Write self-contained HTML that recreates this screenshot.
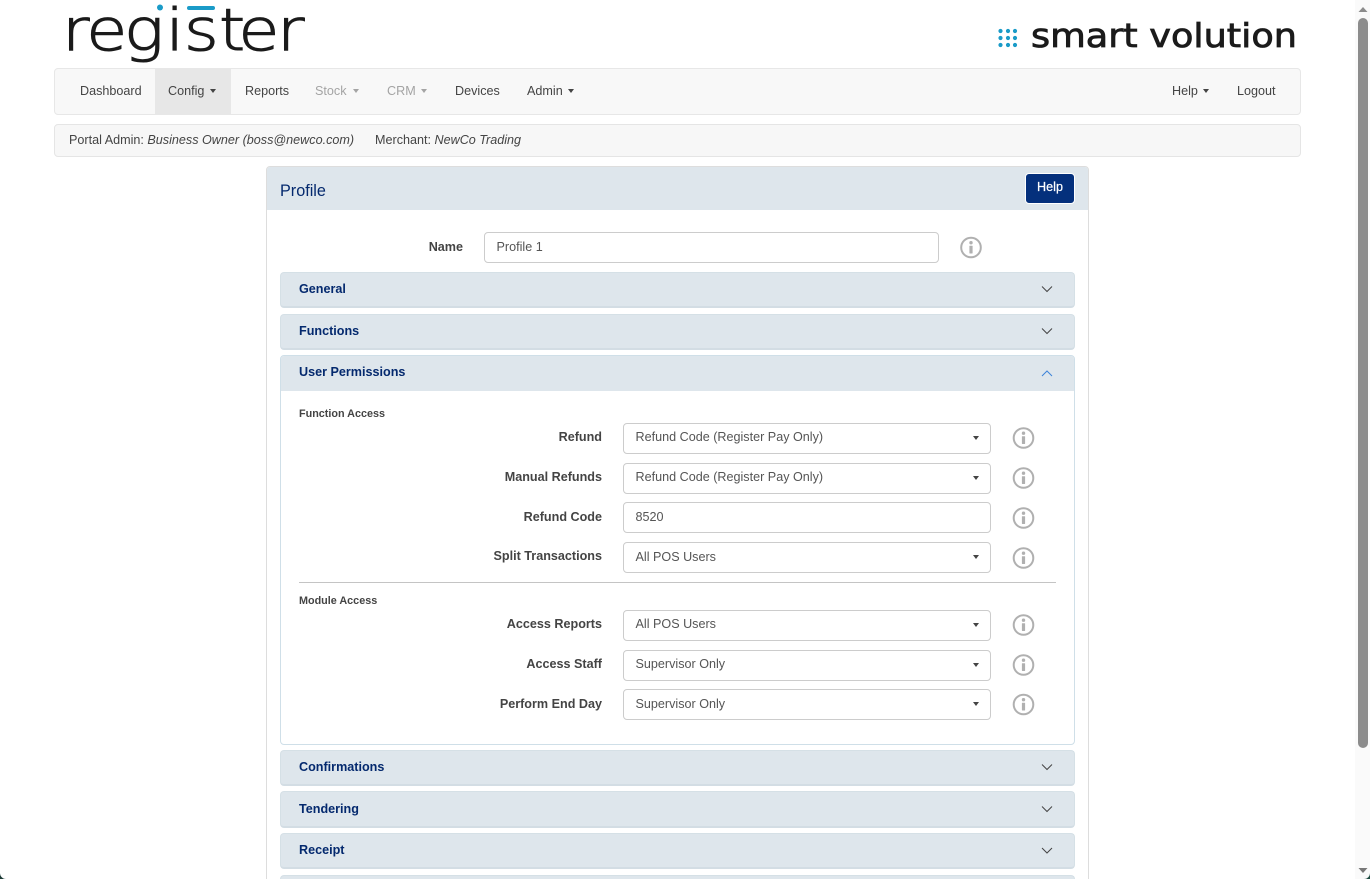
<!DOCTYPE html>
<html><head><meta charset="utf-8"><style>
html,body{margin:0;padding:0;width:1370px;height:879px;overflow:hidden;background:#fff}
body{position:relative;font-family:"Liberation Sans",Arial,sans-serif;font-size:12.6px;color:#333}
.a{position:absolute;white-space:nowrap;line-height:22px}
.box{position:absolute;box-sizing:border-box}
.n{color:#444}.d{color:#a4a4a4}
.car{position:absolute;width:0;height:0;border-top:4px solid #444;border-left:3.5px solid transparent;border-right:3.5px solid transparent}
.acc{position:absolute;left:280px;width:795px;box-sizing:border-box;background:#dee6ec;border:1px solid #d5e0e6;border-bottom:2px solid #d3dde4;border-radius:4px}
.acct{position:absolute;left:299px;font-weight:bold;color:#04296e;line-height:22px;white-space:nowrap}
.l{position:absolute;right:768px;font-weight:bold;color:#444;line-height:22px;white-space:nowrap}
.f{position:absolute;left:623px;width:368px;height:31px;box-sizing:border-box;border:1px solid #ccc;border-radius:4px;background:#fff;padding:0 11.5px;line-height:29px;color:#555;white-space:nowrap}
.u{line-height:27px}
.f i{position:absolute;right:11px;top:12px;width:0;height:0;border-top:4px solid #444;border-left:3.5px solid transparent;border-right:3.5px solid transparent}
svg{position:absolute;overflow:visible}
</style></head><body>

<svg style="left:0;top:0" width="1370" height="879">
<g transform="scale(1.15 1)"><text x="53.900 75 107.800 144 160 190.400 207.300 240.900" y="50" font-family="'DejaVu Sans','Liberation Sans',sans-serif" font-size="58" fill="#1b1b1b" stroke="#1b1b1b" stroke-width="1.100" font-weight="200">register</text></g>
<circle cx="160" cy="7.500" r="3" fill="#1a9bc8"/><rect x="187" y="6" width="28" height="4" rx="2" fill="#1a9bc8"/>
<text x="1031" y="47" font-family="'DejaVu Sans',sans-serif" font-size="33" textLength="266" lengthAdjust="spacingAndGlyphs" fill="#1b1b1b" stroke="#1b1b1b" stroke-width=".8">smart volution</text>
<g fill="#1a9bc8"><circle cx="1000.500" cy="31" r="2.100"/><circle cx="1008" cy="31" r="2.100"/><circle cx="1015" cy="31" r="2.100"/><circle cx="1000.500" cy="38" r="2.100"/><circle cx="1008" cy="38" r="2.100"/><circle cx="1015" cy="38" r="2.100"/><circle cx="1000.500" cy="45" r="2.100"/><circle cx="1008" cy="45" r="2.100"/><circle cx="1015" cy="45" r="2.100"/></g>
</svg>

<div class="box" style="left:54px;top:68px;width:1247px;height:47px;background:#f8f8f8;border:1px solid #e7e7e7;border-radius:4px"></div>
<div class="box" style="left:155px;top:69px;width:76px;height:45px;background:#e7e7e7"></div>
<div class="a n" style="left:80px;top:80px">Dashboard</div>
<div class="a n" style="left:168px;top:80px">Config</div><div class="car" style="left:210px;top:89px"></div>
<div class="a n" style="left:245px;top:80px">Reports</div>
<div class="a d" style="left:315px;top:80px">Stock</div><div class="car" style="left:353px;top:89px;border-top-color:#a4a4a4"></div>
<div class="a d" style="left:387px;top:80px">CRM</div><div class="car" style="left:421px;top:89px;border-top-color:#a4a4a4"></div>
<div class="a n" style="left:455px;top:80px">Devices</div>
<div class="a n" style="left:527px;top:80px">Admin</div><div class="car" style="left:568px;top:89px"></div>
<div class="a n" style="left:1172px;top:80px">Help</div><div class="car" style="left:1203px;top:89px"></div>
<div class="a n" style="left:1237px;top:80px">Logout</div>

<div class="box" style="left:54px;top:124px;width:1247px;height:33px;background:#f7f7f7;border:1px solid #e5e5e5;border-radius:4px"></div>
<div class="a n" style="left:69px;top:129px">Portal Admin: <i>Business Owner (boss@newco.com)</i></div>
<div class="a n" style="left:375px;top:129px">Merchant: <i>NewCo Trading</i></div>

<div class="box" style="left:266px;top:166px;width:823px;height:730px;background:#fff;border:1px solid #ddd;border-radius:4px"></div>
<div class="box" style="left:267px;top:167px;width:821px;height:43px;background:#dee6ec;border-radius:3px 3px 0 0"></div>
<div class="a" style="left:280px;top:180px;font-size:16.200px;color:#04296e">Profile</div>
<div class="box" style="left:1025px;top:173px;width:50px;height:31px;background:#04307c;border:1px solid #fff;border-radius:4px;color:#fff;font-size:12.600px;text-align:center;line-height:27px;-webkit-text-stroke:.2px #fff">Help</div>

<div class="l" style="right:907px;top:236px">Name</div>
<div class="f" style="left:484px;top:232px;width:455px">Profile 1</div>

<div class="acc" style="top:272px;height:36px"></div><div class="acct" style="top:278px">General</div>
<div class="acc" style="top:314px;height:36px"></div><div class="acct" style="top:320px">Functions</div>
<div class="box" style="left:280px;top:355px;width:795px;height:390px;background:#fff;border:1px solid #cfdfe8;border-radius:4px"></div>
<div class="box" style="left:281px;top:356px;width:793px;height:35px;background:#dee6ec;border-radius:3px 3px 0 0"></div>
<div class="acct" style="top:361px">User Permissions</div>
<div class="acc" style="top:750px;height:36px"></div><div class="acct" style="top:756px">Confirmations</div>
<div class="acc" style="top:791px;height:37px"></div><div class="acct" style="top:798px">Tendering</div>
<div class="acc" style="top:833px;height:36px"></div><div class="acct" style="top:839px">Receipt</div>
<div class="acc" style="top:875px;height:20px"></div>

<svg style="left:0;top:0" width="1370" height="879" fill="none" stroke="#444" stroke-width="1">
<path d="M1042 286.500l5 5 5-5"/><path d="M1042 328.500l5 5 5-5"/>
<path d="M1042 376l5-5 5 5" stroke="#3d84d8"/>
<path d="M1042 764.500l5 5 5-5"/><path d="M1042 806.500l5 5 5-5"/><path d="M1042 848l5 5 5-5"/>
</svg>

<div class="a" style="left:299px;top:403px;font-size:10.800px;font-weight:bold;color:#444">Function Access</div>
<div class="l" style="top:426px">Refund</div>
<div class="f u" style="top:423px">Refund Code (Register Pay Only)<i></i></div>
<div class="l" style="top:466px">Manual Refunds</div>
<div class="f u" style="top:463px">Refund Code (Register Pay Only)<i></i></div>
<div class="l" style="top:506px">Refund Code</div>
<div class="f" style="top:502px">8520</div>
<div class="l" style="top:545px">Split Transactions</div>
<div class="f" style="top:542px">All POS Users<i></i></div>
<div class="box" style="left:299px;top:582px;width:757px;height:1px;background:#c4c4c4"></div>
<div class="a" style="left:299px;top:590px;font-size:10.800px;font-weight:bold;color:#444">Module Access</div>
<div class="l" style="top:613px">Access Reports</div>
<div class="f u" style="top:610px">All POS Users<i></i></div>
<div class="l" style="top:653px">Access Staff</div>
<div class="f u" style="top:650px">Supervisor Only<i></i></div>
<div class="l" style="top:693px">Perform End Day</div>
<div class="f" style="top:689px">Supervisor Only<i></i></div>

<svg style="left:0;top:0" width="1370" height="879">
<defs><g id="inf"><circle r="9.800" fill="none" stroke="#b0b0b0" stroke-width="2"/><circle cy="-4.800" r="1.700" fill="#b0b0b0"/><rect x="-1.600" y="-1.800" width="3.200" height="7.800" rx=".5" fill="#b0b0b0"/></g></defs>
<use href="#inf" x="971" y="247.500"/>
<use href="#inf" x="1023.500" y="438"/><use href="#inf" x="1023.500" y="478"/><use href="#inf" x="1023.500" y="518"/><use href="#inf" x="1023.500" y="558"/>
<use href="#inf" x="1023.500" y="625"/><use href="#inf" x="1023.500" y="665"/><use href="#inf" x="1023.500" y="704.500"/>
</svg>

<div class="box" style="left:1355px;top:0;width:15px;height:879px;background:#fafafa"></div>
<div class="box" style="left:1358px;top:18px;width:10px;height:730px;background:#8c8c8c;border-radius:5px"></div>
<svg style="left:0;top:0" width="1370" height="879">
<path d="M1358.500 12l4.500-5 4.500 5z" fill="#8c8c8c"/><path d="M1358.500 868l4.500 5 4.500-5z" fill="#777"/>
<path d="M0 873a6 6 0 0 0 6 6H0z" fill="#1c3a36"/><path d="M1370 873a6 6 0 0 1-6 6h6z" fill="#1c4a40"/>
</svg>
</body></html>
